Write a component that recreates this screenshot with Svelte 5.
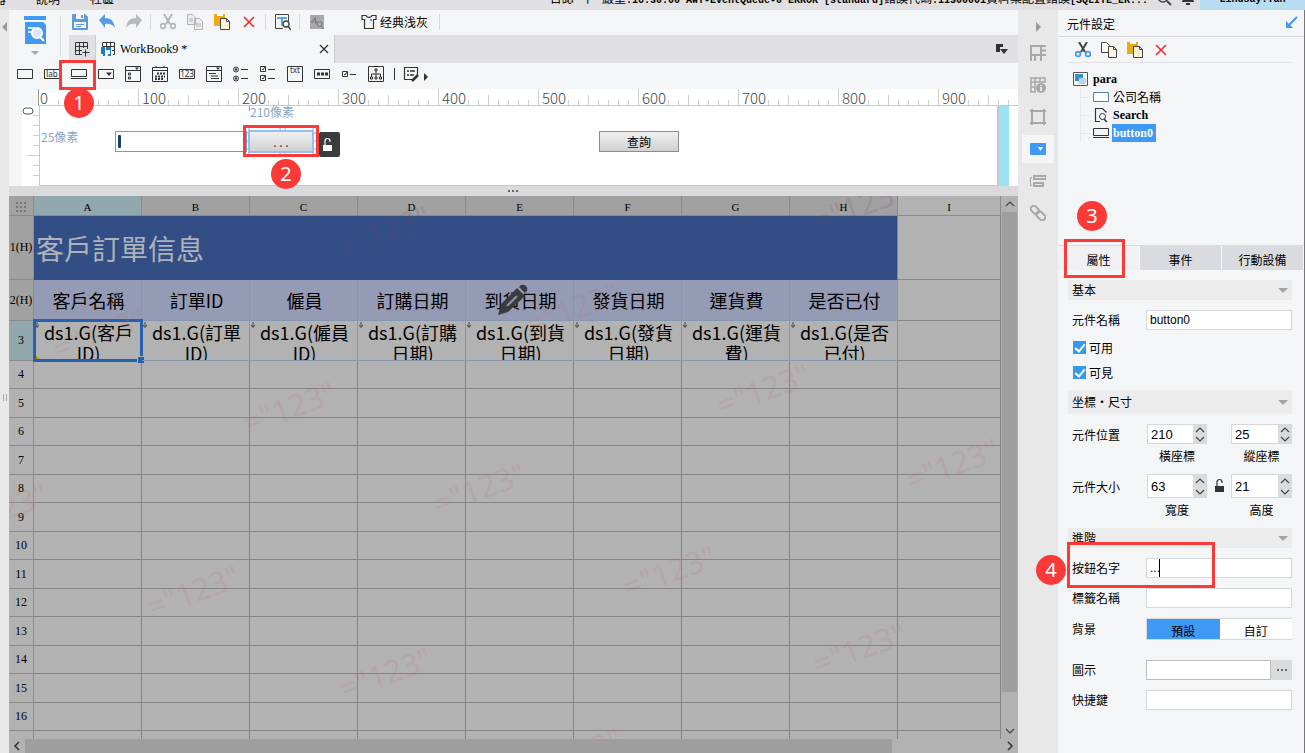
<!--
  Report designer window: toolbars, parameter pane, spreadsheet
  and the widget settings panel on the right.
-->
<script lang="ts">
	const ICONS: Record<string, string> = {
		save: '<path fill="#5a9bd8" d="M1 0h12l3 3v12a1 1 0 0 1-1 1H1a1 1 0 0 1-1-1V1a1 1 0 0 1 1-1z"/><path fill="#f4f5f7" d="M4 0h8v5H4zM2 8h12v6H2z"/><path fill="#5a9bd8" d="M9 1h2v3H9zM4 10h8v1H4zM4 12h5v1H4z"/>',
		undo: '<path fill="#5a9be0" d="M0 6 6 0v4c6 0 9 3 10 10-2-3-5-5-10-4v4z"/>',
		redo: '<path fill="#b8b8ba" d="M16 6 10 0v4C4 4 1 7 0 14c2-3 5-5 10-4v4z"/>',
		cut: '<path fill="none" stroke="#b4b4b6" stroke-width="2" d="M4 0l6 10M12 0 6 10"/><circle cx="3" cy="12" r="2.4" fill="none" stroke="#b4b4b6" stroke-width="1.6"/><circle cx="13" cy="12" r="2.4" fill="none" stroke="#b4b4b6" stroke-width="1.6"/>',
		cutBlue: '<path fill="none" stroke="#444" stroke-width="2" d="M4 0l6 10M12 0 6 10"/><circle cx="3" cy="12" r="2.4" fill="none" stroke="#4099f5" stroke-width="1.8"/><circle cx="13" cy="12" r="2.4" fill="none" stroke="#4099f5" stroke-width="1.8"/>',
		copyGray: '<path fill="#eee" stroke="#b4b4b6" d="M.5.5h5l3 3v7h-8zM7.500 4.500h5l3 3v8h-8z"/><path stroke="#b4b4b6" d="M2 5h4M2 7h4M9 10h5M9 12h5"/>',
		copy: '<path fill="#fffdf4" stroke="#444" d="M.5.5h5l3 3v7h-8z"/><path fill="#fef4dc" stroke="#444" d="M7.500 4.500h5l3 3v8h-8z"/><path fill="none" stroke="#444" d="M12.500 4.500v3h3"/>',
		paste: '<path fill="#eeaa13" d="M0 0h11v12H0z"/><path fill="#fff" d="M3 0h6v2H3z"/><path fill="#fef4dc" stroke="#444" d="M6.500 4.500h6l3 3v8h-9z"/><path fill="none" stroke="#444" d="M12.500 4.500v3h3"/>',
		remove: '<path stroke="#ec2c2c" stroke-width="1.600" d="M3 3l10 10M13 3 3 13"/>',
		preview: '<path fill="none" stroke="#444" d="M8 14.500H.500V.500h13V7"/><path fill="none" stroke="#3b8fe0" stroke-width="1.500" d="M3 5V4h8v1M7 4v8"/><circle cx="11" cy="10" r="3" fill="#f4f5f7" stroke="#444" stroke-width="1.300"/><path stroke="#444" stroke-width="1.600" d="M13 12l3 4"/>',
		monitor: '<path fill="#a8a8aa" d="M1 1h14v14H1z"/><path fill="none" stroke="#777" stroke-width="1.200" d="M2 8h2l2-4 1 5 1-1"/><circle cx="10.500" cy="10" r="2.500" fill="#aaa" stroke="#777"/><path stroke="#777" d="M12 12l3 3"/>',
		shirt: '<path fill="none" stroke="#333" stroke-width="1.200" d="M5 1.500H1v4h2.500v9h9v-9H15v-4h-4C10 4 6 4 5 1.500z"/><path fill="#4099f5" d="M9 5h2v2H9z"/>',
		newTab: '<path fill="none" stroke="#333" d="M8 13.500H1.500v-12h12V8M1.500 5.500h12M1.500 9.500H8M5.500 1.500v12M9.500 1.500V7M8.500 11.500h7M11.500 8.500v7"/>',
		sheet: '<path fill="none" stroke="#333" d="M2.500 5V1.500h12v12H13M2.500 5.500h12M6.500 1.500v4M10.500 1.500V9M12 9.500h3"/><path fill="#1f78c8" d="M1 6h4v9H3v-2H1zM6 6h5v9H8v-2h2V9H6z"/>',
		text: '<path fill="none" stroke="#333" d="M.5 3.500h15v9H.5z"/>',
		button: '<path fill="none" stroke="#333" d="M.5 3.500h15v7H.5zM0 12.500h16"/>',
		combo: '<path fill="none" stroke="#333" d="M.5 3.500h15v9H.5z"/><path fill="#333" d="M8 6.500h6L11 10z"/>',
		comboCheck: '<path fill="none" stroke="#333" d="M.5.5h15v15H.5zM.5 4.500h15"/><path fill="none" stroke="#333" d="M3.500 7h2v2h-2zM3.500 11h2v2h-2z"/><path fill="#333" d="M10 1.500h4L12 4z"/>',
		date: '<path fill="none" stroke="#333" d="M.5 1.500h15v14H.5zM.5 4.500h15M4 0v2M12 0v2"/><path stroke="#333" stroke-width="2" stroke-dasharray="2 1" d="M5 7.500h8M3 10.500h10M3 13h8"/>',
		tree: '<path fill="none" stroke="#333" d="M.5.5h15v15H.5zM.5 4.500h15M3 7.500h7M5 10h7M5 12.500h8"/><path fill="#333" d="M10 1.500h4L12 4z"/>',
		radios: '<circle cx="3" cy="3.500" r="2.500" fill="none" stroke="#333"/><circle cx="3" cy="3.500" r="1.200" fill="#333"/><circle cx="3" cy="12.500" r="2.500" fill="none" stroke="#333"/><circle cx="3" cy="12.500" r="1.200" fill="#333"/><path stroke="#333" d="M8 3.500h7M8 12.500h7"/>',
		checks: '<path fill="none" stroke="#333" d="M.5.500h5v5h-5zM.5 9.500h5v5h-5zM2 3l1 1 2-3M2 12l1 1 2-3M8 3.500h7M8 12.500h7"/>',
		password: '<path fill="none" stroke="#333" d="M.5 3.500h15v9H.5z"/><path stroke="#333" stroke-width="3" stroke-dasharray="3 1" d="M3 8h11"/>',
		check: '<path fill="none" stroke="#333" d="M1.500 5.500h5v5h-5zM3 8l1 1 2-3M9 8.500h6"/>',
		hierarchy: '<path fill="none" stroke="#333" d="M.5.500h15v15H.5z"/><path fill="none" stroke="#333" d="M7 3h2v2H7zM8 5v6M3.500 11V8h9v3M2.500 11h2v2h-2zM7 11h2v2H7zM11.500 11h2v2h-2z"/>',
		form: '<path fill="none" stroke="#333" stroke-width="1.200" d="M9 13.500H1.500v-12h13V9"/><path stroke="#333" stroke-width="1.500" d="M4 5h2M7 5h5M4 9h2M7 9h4"/><path stroke="#333" stroke-width="2.500" d="M9 15l6-6"/>',
		layers: '<path fill="#333" d="M0 3h7v3H4v5H0z"/><path fill="#333" d="M4 8h8l-4 5z"/>',
		cell: '<path fill="none" stroke="#a8a8aa" stroke-width="2" d="M1 16V1h10v9H1M5 10v6M11 10v6M12 1h4M11 5.500h5M11 10h5"/>',
		cellInfo: '<path fill="none" stroke="#a8a8aa" stroke-width="1.500" d="M6 15H1V1h14v5M1 5h14M5 1v14M10 1v4M1 10h4"/><circle cx="11" cy="11" r="5" fill="#a8a8aa"/><path stroke="#e8e8e8" stroke-width="2" d="M11 8v1M11 10v4"/>',
		frame: '<path fill="none" stroke="#a8a8aa" stroke-width="2" d="M2 2h12v12H2z"/><path fill="#a8a8aa" d="M0 1h3v2H0zM13 1h3v2h-3zM0 13h3v2H0zM13 13h3v2h-3zM1 0h2v3H1zM13 0h2v3h-2zM1 13h2v3H1zM13 13h2v3h-2z"/>',
		widget: '<rect y="2" width="16" height="12" rx="1" fill="#4099f5"/><path fill="#fff" d="M8 6h5l-2.500 4z"/>',
		float: '<path fill="none" stroke="#a8a8aa" stroke-width="2" d="M4 3h12v3H4zM4 10h9v3H4z"/><path fill="none" stroke="#a8a8aa" d="M2 4.500H.5v8H2"/>',
		link: '<g fill="none" stroke="#a8a8aa" stroke-width="2" transform="rotate(45 8 8)"><rect x="-1" y="5" width="9" height="6" rx="3"/><rect x="7" y="5" width="10" height="6" rx="3"/></g>',
		para: '<path fill="#fff" stroke="#555" d="M.500 1.500h14v13H.500z"/><path fill="#3490cc" d="M2 3h8v7H2z"/><path fill="#b9d3f6" d="M6 7h7v6H6z"/>',
		textBlue: '<path fill="#fff" stroke="#5a7fb4" d="M.500 3.500h15v9H.500z"/>',
		search: '<path fill="none" stroke="#333" stroke-width="1.200" d="M7 14.500H2.500v-13h7l4 4"/><circle cx="9.500" cy="9.500" r="3" fill="none" stroke="#333"/><path stroke="#333" stroke-width="1.500" d="M11 12l3 3"/>',
		up: '<path fill="none" stroke="#444" stroke-width="1.200" d="M4 10l4-4 4 4"/>',
		down: '<path fill="none" stroke="#444" stroke-width="1.200" d="M4 6l4 4 4-4"/>',
		left: '<path fill="none" stroke="#333" stroke-width="1.500" d="M10 4 6 8l4 4"/>',
		right: '<path fill="none" stroke="#333" stroke-width="1.500" d="M6 4l4 4-4 4"/>',
		close: '<path stroke="#333" stroke-width="1.300" d="M4 4l8 8M12 4l-8 8"/>',
		unlock: '<path fill="currentColor" d="M4 8h9v6H4z"/><path fill="none" stroke="currentColor" stroke-width="1.200" d="M6 8V4q0-2.500 2.500-2.500T11 4v1"/>',
		dock: '<path fill="none" stroke="#4099f5" stroke-width="2" d="M14 2 5 11"/><path fill="#4099f5" d="M3 6v7h7z"/>',
		magnifier: '<circle cx="7" cy="7" r="5" fill="none" stroke="#444" stroke-width="1.500"/><path stroke="#444" stroke-width="2" d="M11 11l4 4"/>',
		bell: '<path fill="#333" d="M2 11q2-1 2-7h8q0 6 2 7v1H2zM6 13h4v2H6z"/>',
	};

	const TOOLS = ['save', 'undo', 'redo', '|', 'cut', 'copyGray', 'paste', 'remove', '|', 'preview', '|', 'monitor'];
	const WIDGETS = [
		'text', 'label', 'button', 'combo', 'comboCheck', 'date', 'number', 'tree',
		'radios', 'checks', 'area', 'password', 'check', 'hierarchy',
	];
	const ICON_TEXT: Record<string, string> = { label: 'lab', number: '123', area: 'txt' };
	const RAIL = ['cell', 'cellInfo', 'frame', 'widget', 'float', 'link'];

	const COLUMNS = ['A', 'B', 'C', 'D', 'E', 'F', 'G', 'H'];
	const HEADS = ['客戶名稱', '訂單ID', '僱員', '訂購日期', '到貨日期', '發貨日期', '運貨費', '是否已付'];
	const FIELDS = [
		['客戶', 'ID'], ['訂單', 'ID'], ['僱員', 'ID'], ['訂購', '日期'],
		['到貨', '日期'], ['發貨', '日期'], ['運貨', '費'], ['是否', '已付'],
	];
	const EMPTY_ROWS = Array.from({ length: 14 }, (_, i) => i + 4);

	const WATERMARKS = [
		[374, 35], [850, 9], [90, 137], [564, 112], [280, 211], [754, 193], [943, 268],
		[470, 292], [-8, 313], [660, 375], [184, 395], [850, 452], [376, 477], [566, 558],
	];

	// ruler marks hidden behind the numbers are skipped
	const TICKS = Array.from({ length: 98 }, (_, i) => i * 10).filter(
		(v) => v % 100 === 0 || v % 100 > (v < 100 ? 10 : 20)
	);

	let widgetName = $state('button0');
	let buttonText = $state('...');
	let enabled = $state(true);
	let visible = $state(true);
	let x = $state('210');
	let y = $state('25');
	let w = $state('63');
	let h = $state('21');
	let background = $state('預設');
</script>

{#snippet icon(name: string)}
	<svg class="icon" width="16" height="16" viewBox="0 0 16 16" aria-hidden="true">
		{#if ICON_TEXT[name]}
			<path
				fill="none"
				stroke="#333"
				d={name === 'area' ? 'M.5.500h15v15H.500z' : 'M.500 3.500h15v9H.500z'}
			/>
			<text x="8" y={name === 'area' ? 7 : 11} text-anchor="middle" font-size="8" fill="#333">{ICON_TEXT[name]}</text>
		{:else}
			{@html ICONS[name]}
		{/if}
	</svg>
{/snippet}

{#snippet section(title: string)}
	<h3 class="section"><span>{title}</span><i class="caret"></i></h3>
{/snippet}

{#snippet stepper(label: string)}
	<span class="steps">
		<button type="button" aria-label="{label} +">{@render icon('up')}</button>
		<button type="button" aria-label="{label} -">{@render icon('down')}</button>
	</span>
{/snippet}

<div class="window">
	<header class="menubar">
		<nav><span>器</span><span>說明</span><span>社區</span></nav>
		<p class="log">
			<span>日誌</span><span>†</span>
			<span>嚴重<code>:16:30:00 AWT-EventQueue-0 ERROR [standard] </code>錯誤代碼<code>:11300001 </code>資料集配置錯誤<code>[SQLITE_ER...</code></span>
		</p>
		<span class="menu-icons">{@render icon('magnifier')}{@render icon('bell')}</span>
		<span class="user">Lindsay.Yan</span>
	</header>

	<div class="body">
		<aside class="left-rail"><i class="fold"></i><i class="grip"></i></aside>

		<main>
			<div class="top">
				<button type="button" class="query" aria-label="報表查詢">
					<svg width="22" height="28" viewBox="0 0 22 28">
						<path fill="#4099f5" d="M0 0h22v4H0zM1 6h18l3 3v19H1z" />
						<path stroke="#d5e8fc" d="M4 12h7M4 16h4" stroke-width="2" />
						<circle cx="13" cy="17" r="5" fill="#d5e8fc" stroke="#fff" stroke-width="2" />
						<path stroke="#fff" stroke-width="2" d="M16 21l4 4" />
					</svg>
					<i class="caret"></i>
				</button>
				<div class="top-right">
					<div class="toolbar">
						{#each TOOLS as tool, i (i)}
							{#if tool === '|'}
								<i class="sep"></i>
							{:else}
								<button type="button" class="tool" aria-label={tool}>{@render icon(tool)}</button>
							{/if}
						{/each}
						<button type="button" class="theme">{@render icon('shirt')}经典浅灰</button>
						<i class="sep"></i>
					</div>
					<div class="tabs">
						<button type="button" class="new-tab" aria-label="new">{@render icon('newTab')}</button>
						<div class="tab">
							{@render icon('sheet')}
							<span>WorkBook9 *</span>
							<button type="button" aria-label="close">{@render icon('close')}</button>
						</div>
						<button type="button" class="layers" aria-label="list">{@render icon('layers')}</button>
					</div>
				</div>
			</div>

			<div class="widgets">
				{#each WIDGETS as name (name)}
					<button type="button" class="tool" aria-label={name}>
						{@render icon(name)}
						{#if name === 'button'}<i class="mark mark-1"></i><b class="step step-1">1</b>{/if}
					</button>
				{/each}
				<i class="bar"></i>
				<button type="button" class="tool" aria-label="form">{@render icon('form')}</button>
				<i class="play"></i>
			</div>

			<div class="ruler">
				<svg width="980" height="17">
					{#each TICKS as v (v)}
						<path
							stroke={v === 0 ? '#999' : '#cdcdd0'}
							d="M{v + 0.5} {v % 100 === 0 ? 0 : v % 50 === 0 ? 6 : 11}V17"
						/>
						{#if v % 100 === 0}<text x={v === 0 ? 2 : v + 4} y="15">{v}</text>{/if}
					{/each}
				</svg>
			</div>

			<div class="pane">
				<div class="v-ruler">
					<svg width="17" height="79">
						{#each [9, 19, 29, 39, 49, 59, 69] as t (t)}
							<path stroke="#cdcdd0" d="M{t === 49 ? 5 : 11} {t + 0.5}H17" />
						{/each}
						<rect x="1" y="2" width="10" height="6" rx="3" fill="none" stroke="#555" />
					</svg>
				</div>
				<div class="canvas">
					<span class="distance left-distance">25像素</span>
					<span class="distance top-distance">210像素</span>
					<input class="para-input" aria-label="公司名稱" />
					<i class="ibeam"></i>
					<svg class="handles" width="74" height="32">
						<path
							stroke="#8aa7c4"
							d="M0 8h74M0 16h74M0 24h74M4 0v32M35 0v32M40 0v32M68 0v32"
						/>
					</svg>
					<button type="button" class="para-button selected">. . .</button>
					<button type="button" class="lock" aria-label="unlock">{@render icon('unlock')}</button>
					<i class="mark mark-2"></i>
					<b class="step step-2">2</b>
					<button type="button" class="para-button search">查詢</button>
				</div>
				<div class="edge"></div>
			</div>

			<div class="splitter">
				<svg width="12" height="4"><path stroke="#666" stroke-width="2" stroke-dasharray="2 2" d="M0 2h10" /></svg>
			</div>

			<div class="sheet">
				<div class="grid">
					<table>
						<colgroup>
							<col class="c-num" />
							{#each COLUMNS as c (c)}<col class="c-data" />{/each}
							<col />
						</colgroup>
						<thead>
							<tr>
								<th>
									<svg width="12" height="10"><path stroke="#777" stroke-width="2" stroke-dasharray="2 2" d="M1 1h10M1 5h10M1 9h10" /></svg>
								</th>
								{#each COLUMNS as c (c)}<th class:current={c === 'A'}>{c}</th>{/each}
								<th class="plain">I</th>
							</tr>
						</thead>
						<tbody>
							<tr class="title-row">
								<th>1(H)</th>
								<td colspan="8">客戶訂單信息</td>
								<td></td>
							</tr>
							<tr class="head-row">
								<th>2(H)</th>
								{#each HEADS as head (head)}<td>{head}</td>{/each}
								<td></td>
							</tr>
							<tr class="field-row">
								<th class="current">3</th>
								{#each FIELDS as [first, second], i (i)}
									<td>
										<div class="field">ds1.G({first}<br />{second})</div>
										<svg class="expand" width="6" height="7"><path fill="none" stroke="#444" d="M3 0v5M1 3l2 2.500L5 3" /></svg>
										{#if i === 0}<i class="selection"></i>{/if}
									</td>
								{/each}
								<td></td>
							</tr>
							{#each EMPTY_ROWS as row (row)}
								<tr class="empty" class:odd={row % 2 === 1}>
									<th class="plain">{row < 17 ? row : ''}</th>
									{#each COLUMNS as c (c)}<td></td>{/each}
									<td></td>
								</tr>
							{/each}
						</tbody>
					</table>
					{#each WATERMARKS as [left, top], i (i)}
						<span class="watermark" class:on-title={top < 80} style="left: {left}px; top: {top}px">="123"</span>
					{/each}
					<svg class="pencil" width="32" height="32" viewBox="0 0 32 32">
						<path fill="#3b3b3d" d="M1 31l3-11L20 4l8 8-17 16zM22 3l2-2q3-1 5 1t1 5l-2 2z" />
						<path stroke="#8b91ab" stroke-width="2" d="M10 22 20 12" />
					</svg>
				</div>
				<div class="v-scroll">
					{@render icon('up')}<i></i>{@render icon('down')}
				</div>
				<div class="h-scroll">{@render icon('left')}<i></i>{@render icon('right')}</div>
			</div>
		</main>

		<aside class="rail">
			<i class="unfold"></i>
			{#each RAIL as name (name)}
				<button type="button" class:active={name === 'widget'} aria-label={name}>{@render icon(name)}</button>
			{/each}
		</aside>

		<aside class="panel">
			<h2>元件設定 {@render icon('dock')}</h2>
			<div class="panel-tools">
				{#each ['cutBlue', 'copy', 'paste', 'remove'] as name (name)}
					<button type="button" aria-label={name}>{@render icon(name)}</button>
				{/each}
			</div>
			<ul class="tree">
				<li>{@render icon('para')}<span>para</span></li>
				<li class="child">{@render icon('textBlue')}<span>公司名稱</span></li>
				<li class="child">{@render icon('search')}<span>Search</span></li>
				<li class="child picked">{@render icon('button')}<span>button0</span></li>
			</ul>

			<div class="panel-tabs">
				<button type="button" class="on">屬性</button>
				<button type="button">事件</button>
				<button type="button">行動設備</button>
				<i class="mark mark-3"></i>
				<b class="step step-3">3</b>
			</div>

			<form>
				{@render section('基本')}
				<div class="row">
					<label for="name">元件名稱</label>
					<input id="name" type="text" bind:value={widgetName} />
				</div>
				<div class="ticks">
					<label><input type="checkbox" bind:checked={enabled} />可用</label>
					<label><input type="checkbox" bind:checked={visible} />可見</label>
				</div>

				<div class="tall">{@render section('坐標・尺寸')}</div>
				<div class="pair">
					<span>元件位置</span>
					<div class="spin"><input id="pos-x" bind:value={x} />{@render stepper('x')}</div>
					<i></i>
					<div class="spin"><input id="pos-y" bind:value={y} />{@render stepper('y')}</div>
					<label class="under-first" for="pos-x">橫座標</label>
					<label class="under-last" for="pos-y">縱座標</label>
				</div>
				<div class="pair size">
					<span>元件大小</span>
					<div class="spin"><input id="width" bind:value={w} />{@render stepper('w')}</div>
					<i>{@render icon('unlock')}</i>
					<div class="spin"><input id="height" bind:value={h} />{@render stepper('h')}</div>
					<label class="under-first" for="width">寬度</label>
					<label class="under-last" for="height">高度</label>
				</div>

				{@render section('進階')}
				<div class="row">
					<label for="caption">按鈕名字</label>
					<div class="caret-box"><input id="caption" type="text" bind:value={buttonText} /><i class="cursor"></i></div>
					<i class="mark mark-4"></i>
					<b class="step step-4">4</b>
				</div>
				<div class="row">
					<label for="tag">標籤名稱</label>
					<input id="tag" type="text" />
				</div>
				<div class="row">
					<span>背景</span>
					<div class="segment">
						{#each ['預設', '自訂'] as option (option)}
							<button type="button" class:on={background === option} onclick={() => (background = option)}>
								{option}
							</button>
						{/each}
					</div>
				</div>
				<div class="row icon-row">
					<label for="icon">圖示</label>
					<div class="browse">
						<input id="icon" type="text" />
						<button type="button" aria-label="圖示">
							<svg width="10" height="2"><path stroke="#666" stroke-width="2" stroke-dasharray="2 2" d="M0 1h10" /></svg>
						</button>
					</div>
				</div>
				<div class="row">
					<label for="hotkey">快捷鍵</label>
					<input id="hotkey" type="text" />
				</div>
			</form>
		</aside>
	</div>
</div>

<style>
	:global(body) {
		font-family: 'Noto Sans CJK TC', sans-serif;
		font-size: 12px;
		color: #000;
	}

	* {
		box-sizing: border-box;
	}

	button,
	input {
		font: inherit;
		color: inherit;
		margin: 0;
		padding: 0;
		border: 0;
		background: none;
	}

	i,
	b {
		font-style: normal;
	}

	.icon {
		display: block;
		flex-shrink: 0;
		font-family: 'Noto Sans', sans-serif;
	}

	.window {
		display: flex;
		flex-direction: column;
		height: 100vh;
		overflow: hidden;
		background: #f4f5f7;
	}

	.menubar {
		display: flex;
		align-items: flex-end;
		flex-shrink: 0;
		height: 10px;
		padding-bottom: 4px;
		line-height: 14px;
		overflow: hidden;
		background: #e0e0e2;
		white-space: nowrap;
	}

	.menubar nav {
		display: flex;
		gap: 30px;
		flex: 1;
		margin-left: -6px;
	}

	.log {
		display: flex;
		gap: 8px;
		margin: 0 8px 0 0;
	}

	.log code {
		font: bold 10px 'Liberation Mono', monospace;
		white-space: pre;
	}

	.menu-icons {
		display: flex;
		gap: 8px;
	}

	.user {
		align-self: stretch;
		display: flex;
		align-items: flex-end;
		justify-content: center;
		width: 105px;
		margin: 0 0 -4px 4px;
		padding-bottom: 4px;
		background: #b8dcf2;
		font: bold 10px/12px 'Liberation Mono', monospace;
	}

	.body {
		display: flex;
		flex: 1;
		min-height: 0;
	}

	.left-rail {
		width: 9px;
		flex-shrink: 0;
		display: flex;
		flex-direction: column;
		align-items: center;
		padding-top: 12px;
		background: #e8e8e8;
	}

	.fold {
		border: 5px solid transparent;
		border-right-color: #999;
		border-left: 0;
	}

	.grip {
		width: 4px;
		height: 7px;
		margin-top: 362px;
		border: solid #aaa;
		border-width: 0 1px;
	}

	main {
		flex: 1;
		min-width: 0;
		display: flex;
		flex-direction: column;
	}

	.top {
		display: flex;
		height: 53px;
		flex-shrink: 0;
	}

	.query {
		width: 52px;
		height: 40px;
		margin-top: 6px;
		display: flex;
		flex-direction: column;
		align-items: center;
		gap: 7px;
		border-right: 1px solid #d8d8dc;
	}

	.caret {
		border: 5px solid transparent;
		border-top-color: #a5a5a8;
		border-bottom: 0;
	}

	.query .caret {
		border-width: 4px 4px 0;
	}

	.top-right {
		flex: 1;
		display: flex;
		flex-direction: column;
	}

	.toolbar {
		height: 25px;
		display: flex;
		align-items: center;
		padding: 0 0 2px 5px;
	}

	.tool {
		position: relative;
		width: 27px;
		height: 22px;
		display: flex;
		align-items: center;
		justify-content: center;
	}

	.sep {
		width: 1px;
		height: 16px;
		margin: 0 3px;
		background: #d8d8dc;
	}

	.theme {
		display: flex;
		align-items: center;
		gap: 3px;
		margin: 0 8px 0 31px;
		font-family: 'Noto Sans CJK SC', sans-serif;
	}

	.tabs {
		height: 28px;
		display: flex;
		align-items: center;
		margin-left: 8px;
		background: #e0e0e2;
	}

	.new-tab {
		display: flex;
		justify-content: center;
		width: 26px;
	}

	.tab {
		display: flex;
		align-items: center;
		gap: 4px;
		width: 240px;
		height: 28px;
		padding: 0 2px 0 4px;
		border: solid #cdcdd0;
		border-width: 0 1px;
		background: #f4f5f7;
		font-family: 'Liberation Serif', serif;
	}

	.tab span {
		flex: 1;
	}

	.layers {
		margin: 0 6px 0 auto;
	}

	.widgets {
		display: flex;
		align-items: center;
		height: 26px;
		flex-shrink: 0;
		padding: 0 2px 4px;
	}

	.bar {
		width: 1px;
		height: 12px;
		margin: 0 2px 0 5px;
		background: #333;
	}

	.play {
		margin-top: 6px;
		border: 4px solid transparent;
		border-left-color: #333;
		border-right: 0;
	}

	.ruler {
		height: 17px;
		flex-shrink: 0;
		margin-left: 29px;
		overflow: hidden;
		background: #fff;
		border-bottom: 1px solid #c8c8cb;
		fill: #444;
		font-size: 15px;
		font-weight: 300;
	}

	.ruler svg,
	.v-ruler svg {
		display: block;
	}

	.pane {
		display: flex;
		height: 80px;
		flex-shrink: 0;
		padding-left: 13px;
	}

	.v-ruler {
		width: 17px;
		background: #fff;
	}

	.canvas {
		position: relative;
		flex: 1;
		background: #fff;
		border: solid #c8c8cb;
		border-width: 0 2px 1px 1px;
	}

	.edge {
		width: 19px;
		background: #fff;
		border-left: 10px solid #9be3f4;
	}

	.distance {
		position: absolute;
		color: #8aa7c4;
		line-height: 12px;
	}

	.left-distance {
		left: 1px;
		top: 25px;
	}

	.top-distance {
		left: 209px;
		top: 0;
		padding-left: 1px;
	}

	.top-distance::before {
		content: '';
		position: absolute;
		left: 0;
		top: 0;
		width: 1px;
		height: 5px;
		background: #8aa7c4;
	}

	.para-input {
		position: absolute;
		left: 75px;
		top: 25px;
		width: 132px;
		height: 21px;
		border: 1px solid #8097b8;
	}

	.ibeam {
		position: absolute;
		left: 78px;
		top: 29px;
		width: 3px;
		height: 13px;
		border-radius: 1px;
		background: #14406e;
	}

	.handles {
		position: absolute;
		left: 205px;
		top: 19px;
	}

	.para-button {
		position: absolute;
		top: 25px;
		width: 80px;
		height: 21px;
		border: 1px solid #8c8c8c;
		background: linear-gradient(#f0f0f0, #d0d0d0);
		line-height: 18px;
	}

	.para-button.selected {
		left: 208px;
		top: 24px;
		width: 66px;
		height: 23px;
		border: 2px solid #8dc1f8;
		color: #603050;
	}

	.para-button.search {
		left: 559px;
	}

	.lock {
		position: absolute;
		left: 279px;
		top: 26px;
		width: 21px;
		height: 25px;
		border-radius: 2px;
		background: #3a3d40;
		color: #fff;
	}

	.mark {
		position: absolute;
		z-index: 2;
		border: 3px solid #fb3a38;
		pointer-events: none;
	}

	.step {
		position: absolute;
		z-index: 2;
		width: 30px;
		height: 30px;
		border-radius: 50%;
		background: #fb3a38;
		color: #fff;
		font: 20px/30px 'Noto Sans', sans-serif;
		text-align: center;
	}

	.mark-1 {
		left: -6px;
		top: -3px;
		width: 37px;
		height: 30px;
	}

	.step-1 {
		left: -1px;
		top: 25px;
	}

	.mark-2 {
		left: 203px;
		top: 19px;
		width: 76px;
		height: 32px;
	}

	.step-2 {
		left: 231px;
		top: 53px;
	}

	.splitter {
		height: 10px;
		flex-shrink: 0;
		display: flex;
		justify-content: center;
		padding-top: 3px;
		background: #dadadc;
	}

	.sheet {
		flex: 1;
		min-height: 0;
		display: grid;
		grid-template: minmax(0, 1fr) 14px / minmax(0, 1fr) 17px;
		background: #b2b2b2;
	}

	.grid {
		position: relative;
		overflow: hidden;
	}

	table {
		width: 100%;
		table-layout: fixed;
		border-collapse: separate;
		border-spacing: 0;
	}

	.c-num {
		width: 25px;
	}

	.c-data {
		width: 108px;
	}

	th,
	td {
		padding: 0;
		border: solid #858585;
		border-width: 0 1px 1px 0;
		text-align: center;
		white-space: nowrap;
	}

	th {
		background: #a1a1a1;
		font: 12px 'Liberation Serif', serif;
		border-color: #8c8c8c;
	}

	thead th {
		height: 20px;
		padding-top: 3px;
		font-size: 11px;
	}

	th.current {
		background: #92a8af;
	}

	th.plain {
		background: #b2b2b2;
	}

	th svg {
		display: block;
		margin: 0 auto;
	}

	.title-row td {
		height: 64px;
	}

	.title-row td[colspan] {
		padding-left: 2px;
		background: #334e84;
		border-bottom-color: #334e84;
		color: #aeb3ba;
		font-size: 28px;
		line-height: 40px;
		text-align: left;
	}

	.head-row td {
		height: 41px;
		font-size: 18px;
		line-height: 24px;
	}

	.head-row td:not(:last-child) {
		padding-left: 2px;
		background: #959bb5;
		border-color: #8398b0;
	}

	.field-row td {
		position: relative;
		height: 40px;
	}

	.field-row td:not(:last-child) {
		border-color: #8398b0;
	}

	.field {
		height: 39px;
		padding: 1px 0 0 2px;
		overflow: hidden;
		font-size: 18px;
		line-height: 21px;
	}

	.expand {
		position: absolute;
		left: 0;
		top: 1px;
	}

	.selection {
		position: absolute;
		inset: -2px -2px -2px -1px;
		border: 3px solid #2660b0;
	}

	.selection::before {
		content: '';
		position: absolute;
		left: 0;
		bottom: 0;
		border: 0 solid transparent;
		border-right-width: 4px;
		border-bottom: 4px solid #c09a10;
	}

	.selection::after {
		content: '';
		position: absolute;
		right: -4px;
		bottom: -4px;
		width: 6px;
		height: 6px;
		border: solid #b2b2b2;
		border-width: 1px 0 0 1px;
		background: #2660b0;
	}

	.empty td {
		height: 28px;
	}

	.empty.odd td {
		height: 29px;
	}

	.watermark {
		position: absolute;
		color: rgb(190 110 115 / 18%);
		font: 31px/32px 'Noto Sans', sans-serif;
		transform: translate(-50%, -50%) rotate(-20deg);
		pointer-events: none;
	}

	.watermark.on-title {
		color: rgb(120 60 110 / 18%);
	}

	.pencil {
		position: absolute;
		left: 488px;
		top: 88px;
	}

	.v-scroll,
	.h-scroll {
		display: flex;
		align-items: center;
		background: #b2b2b2;
	}

	.v-scroll {
		flex-direction: column;
	}

	.v-scroll i {
		width: 15px;
		flex: 1;
		margin-bottom: 31px;
		background: #9e9e9e;
	}

	.h-scroll {
		grid-column: 1 / -1;
	}

	.h-scroll i {
		flex: 1;
		height: 14px;
		margin-right: 110px;
		background: #9e9e9e;
	}

	.rail {
		width: 40px;
		flex-shrink: 0;
		display: flex;
		flex-direction: column;
		align-items: center;
		gap: 4px;
		padding-top: 12px;
		background: #e8e8e8;
	}

	.unfold {
		margin-bottom: 3px;
		border: 5px solid transparent;
		border-left-color: #999;
		border-right: 0;
	}

	.rail button {
		width: 32px;
		height: 28px;
		display: flex;
		align-items: center;
		justify-content: center;
	}

	.rail .active {
		background: #f5f5f7;
	}

	.panel {
		width: 247px;
		flex-shrink: 0;
		border-right: 1px solid #77777a;
	}

	h2 {
		display: flex;
		align-items: center;
		justify-content: space-between;
		height: 27px;
		margin: 0;
		padding: 0 5px 0 9px;
		border-bottom: 1px solid #d8d8dc;
		font-size: 12px;
		font-weight: 400;
	}

	.panel-tools {
		display: flex;
		align-items: center;
		gap: 10px;
		height: 26px;
		margin: 0 11px 0 10px;
		padding-left: 7px;
		border-bottom: 1px solid #e4e4e7;
	}

	.tree {
		height: 182px;
		margin: 0;
		padding: 7px 0 0 15px;
		list-style: none;
		font: bold 12px 'Liberation Serif', 'Noto Sans CJK TC', serif;
	}

	.tree li {
		display: flex;
		align-items: center;
		gap: 4px;
		height: 18px;
	}

	.tree .child {
		margin-left: 7px;
		gap: 3px;
		border-left: 1px solid #e8e8ea;
	}

	.tree .child::before {
		content: '';
		width: 9px;
		height: 1px;
		background: #e8e8ea;
	}

	.tree .child:nth-child(2) span {
		font: 12px/18px 'Noto Sans CJK TC', sans-serif;
	}

	.tree .child span {
		padding: 0 3px 0 1px;
		line-height: 18px;
	}

	.picked span {
		background: #4099f5;
		color: #fff;
	}

	.panel-tabs {
		position: relative;
		display: flex;
		gap: 1px;
		height: 25px;
		padding: 0 1px 0 0;
		border-top: 1px solid #dcdcdf;
	}

	.panel-tabs button {
		flex: 1;
		padding-top: 3px;
		background: #dadbde;
	}

	.panel-tabs .on {
		flex: 0 0 81px;
		background: #f1f1f3;
	}

	.mark-3 {
		left: 6px;
		top: -7px;
		width: 61px;
		height: 39px;
	}

	.step-3 {
		left: 19px;
		top: -45px;
	}

	form {
		display: flex;
		flex-direction: column;
		gap: 10px;
		padding: 10px 12px 0 10px;
	}

	.section {
		display: flex;
		align-items: center;
		justify-content: space-between;
		height: 20px;
		margin: 0;
		padding: 0 4px;
		background: #ececec;
		font-size: 12px;
		font-weight: 400;
		line-height: 16px;
	}

	.tall .section {
		height: 24px;
	}

	.row {
		position: relative;
		display: grid;
		grid-template-columns: 74px 1fr;
		align-items: center;
		padding-left: 4px;
		line-height: 20px;
	}

	.row input[type='text'] {
		width: 100%;
		height: 20px;
		padding: 0 3px;
		border: 1px solid #d8d8dc;
		background: #fff;
		font-family: 'Liberation Sans', sans-serif;
	}

	.ticks {
		display: grid;
		margin: -5px 0;
		padding-left: 5px;
	}

	.ticks label {
		display: flex;
		align-items: center;
		gap: 3px;
		height: 25px;
	}

	.ticks input {
		appearance: none;
		display: grid;
		place-items: center;
		width: 13px;
		height: 13px;
		border: 1px solid #3498f0;
		background: #fff;
	}

	.ticks input:checked {
		background: #3498f0;
	}

	.ticks input:checked::after {
		content: '';
		width: 4px;
		height: 8px;
		margin-bottom: 2px;
		border: solid #fff;
		border-width: 0 2px 2px 0;
		transform: rotate(40deg);
	}

	.pair {
		display: grid;
		grid-template-columns: 75px 60px 1fr 61px;
		align-items: center;
		padding-left: 4px;
	}

	.pair.size {
		margin: -4px 0;
	}

	.pair > i {
		display: flex;
		justify-content: center;
		color: #333;
	}

	.pair > label {
		line-height: 24px;
		text-align: center;
	}

	.under-first {
		grid-column: 2;
	}

	.under-last {
		grid-column: 4;
	}

	.spin {
		display: flex;
		height: 20px;
		border: 1px solid #d8d8dc;
		background: #fff;
	}

	.size .spin {
		height: 24px;
	}

	.spin input {
		flex: 1;
		min-width: 0;
		padding-left: 3px;
		font: 13px 'Liberation Sans', sans-serif;
	}

	.steps {
		display: flex;
		flex-direction: column;
		width: 13px;
		background: #dadbde;
	}

	.steps button {
		display: flex;
		align-items: center;
		justify-content: center;
		flex: 1;
		min-height: 0;
		overflow: hidden;
	}

	.caret-box {
		position: relative;
		display: flex;
	}

	.cursor {
		position: absolute;
		left: 13px;
		top: 1px;
		width: 1px;
		height: 18px;
		background: #000;
	}

	.mark-4 {
		left: -1px;
		top: -16px;
		width: 148px;
		height: 46px;
	}

	.step-4 {
		left: -32px;
		top: -3px;
	}

	.segment {
		display: flex;
		height: 22px;
		border: 1px solid #d8d8dc;
		border-right: 0;
		background: #fff;
	}

	.segment button {
		flex: 1;
		padding-top: 2px;
	}

	.segment .on {
		background: #4099f5;
	}

	.icon-row {
		margin-top: 10px;
	}

	.browse {
		display: flex;
	}

	.row .browse input {
		flex: 1;
		min-width: 0;
		border-color: #bcbcbf;
	}

	.browse button {
		display: flex;
		align-items: center;
		justify-content: center;
		width: 21px;
		background: #dadbde;
	}
</style>
